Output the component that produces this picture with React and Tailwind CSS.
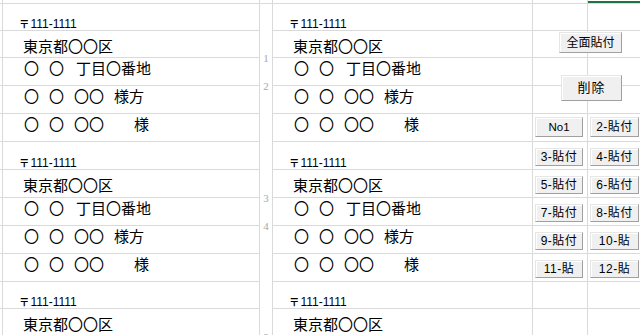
import React from "react";

const H = [
  "h-[27px]", "h-[27px]", "h-[28px]", "h-[28px]", "h-[28px]", "h-[28px]",
  "h-[28px]", "h-[28px]", "h-[28px]", "h-[28px]", "h-[27px]", "h-[28px]",
];

function Column({ className, render, noRows }) {
  return (
    <div className={"flex flex-col shrink-0 border-r border-[#dadada] " + className}>
      <div className="h-[4px] shrink-0 border-b border-[#dadada]" />
      {noRows
        ? noRows
        : H.map((h, i) => (
            <div key={i} className={h + " shrink-0 border-b border-[#dadada] flex flex-col"}>
              {render ? render(i) : null}
            </div>
          ))}
    </div>
  );
}

function AddrCell({ i }) {
  const k = i % 5;
  if (k === 0)
    return (
      <div className="flex-1 flex items-end pl-[16px]">
        <p className="leading-[12px] text-[12px] text-black font-['Liberation_Sans','Noto_Sans_CJK_JP',sans-serif]">
          <span className="text-[10.5px] font-bold mr-[1px] font-['Noto_Sans_CJK_JP',sans-serif]">〒</span>
          <span>111-1111</span>
        </p>
      </div>
    );
  if (k === 1)
    return <div className="pt-[7px] pl-[20px] text-[15px] leading-[15px] text-black">東京都〇〇区</div>;
  if (k === 2)
    return (
      <div className="pt-[2px] pl-[21px] flex text-[15px] leading-[15px] text-black">
        <span>〇</span>
        <span className="ml-[10px]">〇</span>
        <span className="ml-[12px]">丁目〇番地</span>
      </div>
    );
  if (k === 3)
    return (
      <div className="pt-[2px] pl-[21px] flex text-[15px] leading-[15px] text-black">
        <span>〇</span>
        <span className="ml-[10px]">〇</span>
        <span className="ml-[10px]">〇〇</span>
        <span className="ml-[10px]">様方</span>
      </div>
    );
  return (
    <div className="pt-[2px] pl-[21px] flex text-[15px] leading-[15px] text-black">
      <span>〇</span>
      <span className="ml-[10px]">〇</span>
      <span className="ml-[10px]">〇〇</span>
      <span className="ml-[30px]">様</span>
    </div>
  );
}

function Btn({ className, children }) {
  return (
    <div
      className={
        "absolute flex items-center justify-center bg-[#f0f0f0] border border-t-[#e6e6e6] border-l-[#e6e6e6] border-r-[#a0a0a0] border-b-[#a0a0a0] shadow-[inset_1px_1px_0_#ffffff] text-black leading-[12px] font-['Liberation_Sans','Noto_Sans_CJK_JP',sans-serif] " +
        className
      }
    >
      {children}
    </div>
  );
}

export default function App() {
  return (
    <div className="relative w-[640px] h-[335px] overflow-hidden bg-white flex font-['Noto_Sans_CJK_JP',sans-serif]">
      <Column className="w-[3px]" />
      <Column className="w-[257px]" render={(i) => <AddrCell i={i} />} />
      <Column
        className="w-[13px]"
        noRows={
          <div className="flex flex-col items-center text-[11px] leading-[11px] text-[#a8a8a8] font-['Liberation_Serif',serif]">
            <span className="mt-[49px]">1</span>
            <span className="mt-[17px]">2</span>
            <span className="mt-[101px]">3</span>
            <span className="mt-[17px]">4</span>
            <div className="mt-[102px] w-[4px] h-[1px] bg-[#c8c8c8]" />
          </div>
        }
      />
      <Column className="w-[260px]" render={(i) => <AddrCell i={i} />} />
      <Column className="w-[55px]" />
      <div className="flex-1 flex flex-col">
        <div className="h-[4px] shrink-0 border-b border-[#dadada] flex flex-col">
          <div className="h-[1px]" />
          <div className="h-[2px] bg-[#217346]" />
        </div>
        {H.map((h, i) => (
          <div key={i} className={h + " shrink-0 border-b border-[#dadada]"} />
        ))}
      </div>

      <Btn className="left-[559px] top-[32px] w-[63px] h-[21px] text-[12px]">全面貼付</Btn>
      <Btn className="left-[561px] top-[75px] w-[61px] h-[26px] text-[13px] tracking-[1px]">削除</Btn>

      <Btn className="left-[535px] top-[117px] w-[48px] h-[20px] text-[11.5px]">No1</Btn>
      <Btn className="left-[590px] top-[117px] w-[49px] h-[20px] text-[12px] tracking-[0.5px]">2-貼付</Btn>
      <Btn className="left-[535px] top-[148px] w-[48px] h-[18px] text-[12px] tracking-[0.5px]">3-貼付</Btn>
      <Btn className="left-[590px] top-[148px] w-[49px] h-[18px] text-[12px] tracking-[0.5px]">4-貼付</Btn>
      <Btn className="left-[535px] top-[176px] w-[48px] h-[18px] text-[12px] tracking-[0.5px]">5-貼付</Btn>
      <Btn className="left-[590px] top-[176px] w-[49px] h-[18px] text-[12px] tracking-[0.5px]">6-貼付</Btn>
      <Btn className="left-[535px] top-[204px] w-[48px] h-[18px] text-[12px] tracking-[0.5px]">7-貼付</Btn>
      <Btn className="left-[590px] top-[204px] w-[49px] h-[18px] text-[12px] tracking-[0.5px]">8-貼付</Btn>
      <Btn className="left-[535px] top-[232px] w-[48px] h-[18px] text-[12px] tracking-[0.5px]">9-貼付</Btn>
      <Btn className="left-[590px] top-[232px] w-[49px] h-[18px] text-[12px] tracking-[0.5px]">10-貼</Btn>
      <Btn className="left-[535px] top-[260px] w-[48px] h-[18px] text-[12px] tracking-[0.5px]">11-貼</Btn>
      <Btn className="left-[590px] top-[260px] w-[49px] h-[18px] text-[12px] tracking-[0.5px]">12-貼</Btn>
    </div>
  );
}
